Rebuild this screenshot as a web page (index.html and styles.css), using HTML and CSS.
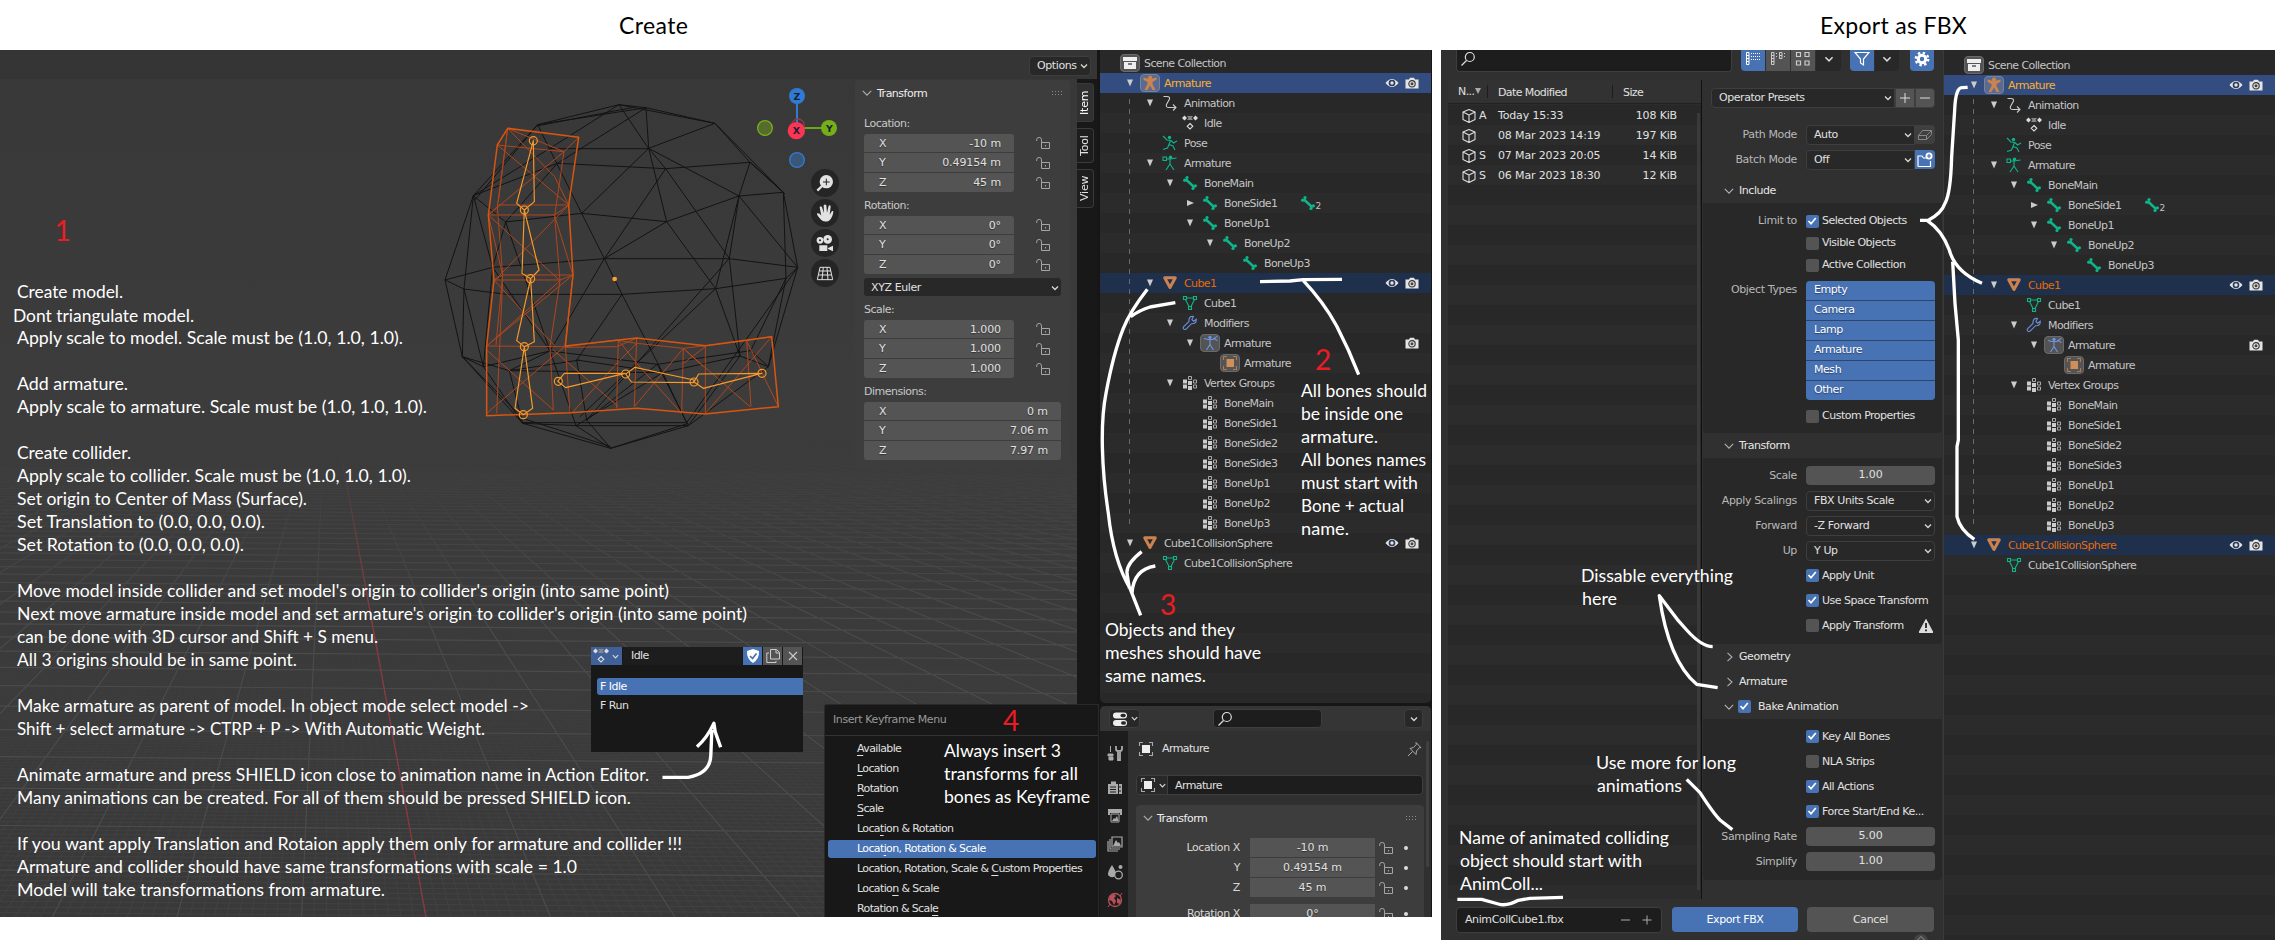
FILE: index.html
```html
<!DOCTYPE html>
<html lang="en">
<head>
<meta charset="utf-8">
<title>Create / Export as FBX</title>
<link rel="stylesheet" href="styles.css">
</head>
<body>
<svg class="defs" width="0" height="0">
  <symbol id="chev" viewBox="0 0 10 10"><path d="M2 3.5l3 3 3-3" fill="none" stroke="#d8d8d8" stroke-width="1.3"/></symbol>
  <symbol id="fold" viewBox="0 0 10 10"><path d="M.8 2.8L5 7.2l4.200-4.400" fill="none" stroke="#b0b0b0" stroke-width="1.100"/></symbol>
  <symbol id="foldr" viewBox="0 0 10 10"><path d="M3.500 .8L8 5 3.500 9.200" fill="none" stroke="#b0b0b0" stroke-width="1.100"/></symbol>
  <symbol id="lock" viewBox="0 0 14 12"><path d="M.7 4V2.800A2.300 2.300 0 0 1 5.500 2.800V5.500M5.500 5.500h8v6h-8z" fill="none" stroke="#a5a5a5" stroke-width="1"/><path d="M9.500 8v1.500" stroke="#a5a5a5"/></symbol>
  <symbol id="grip" viewBox="0 0 11 5"><path d="M0 .5h11M0 3.500h11" stroke="#8a8a8a" stroke-dasharray="1 2"/></symbol>
  <symbol id="mag" viewBox="0 0 16 16"><circle cx="9.800" cy="6" r="4.500" fill="none" stroke="#ddd" stroke-width="1.200"/><path d="M6.500 9.500L1.500 14.500" stroke="#ddd" stroke-width="1.300"/></symbol>
  <symbol id="collection" viewBox="0 0 16 16"><path d="M1 2h14v4H1zM2 7h12v7H2z" fill="#eee"/><path d="M6 9h4" stroke="#555" stroke-width="1.500"/></symbol>
  <symbol id="man" viewBox="0 0 16 16"><path d="M1.500 2.500l5 1.300a2 2 0 1 1 3.200 0l4.800-1.300v2.200L10.500 7v2l3 6h-3L8 10.500 5.500 15h-3l3-6V7l-4-2.300z" fill="#cb8350"/></symbol>
  <symbol id="anim" viewBox="0 0 16 16"><path d="M1.500 1.500H5Q8 1.500 7.500 4L4.500 9.500Q3.500 12.500 7 12.500h7M11 9.500l3 3-3 3" fill="none" stroke="#ccc" stroke-width="1.100"/></symbol>
  <symbol id="action" viewBox="0 0 16 16"><path d="M0 3l2.500-2.500L5 3 2.500 5.500zM11 3l2.500-2.500L16 3l-2.500 2.500z" fill="#ddd"/><path d="M5 1h6L9.500 3 11 5H5l1.500-2z" fill="#888"/><path d="M8 8.500l2.800 2.800L8 14l-2.800-2.700z" fill="none" stroke="#ddd" stroke-width="1.100"/></symbol>
  <symbol id="pose" viewBox="0 0 16 16"><circle cx="7.500" cy="2.500" r="1.700" fill="#0fb58a"/><path d="M1 1l4 4 4 .5 2.500 2.500L15 6M8.500 5.500L7 9.500l4 1.500 2 4M7 9.500L5.500 13 1 14.500" fill="none" stroke="#0fb58a" stroke-width="1.100"/></symbol>
  <symbol id="armdata" viewBox="0 0 16 16"><path d="M1 2h3.500v3.500H1zM4.500 4H8l6.500-1M8 4v5M8 9l-4 6M8 9l4 6" fill="none" stroke="#0fb58a" stroke-width="1.100"/><circle cx="8.500" cy="2.200" r="1.700" fill="#0fb58a"/></symbol>
  <symbol id="bone" viewBox="0 0 16 16"><path d="M4 4.500L12 12" stroke="#0fb58a" stroke-width="2.400"/><g fill="#0fb58a"><circle cx="5" cy="2.500" r="1.600"/><circle cx="2.700" cy="5.200" r="1.600"/><circle cx="13.400" cy="10.800" r="1.600"/><circle cx="11" cy="13.500" r="1.600"/><circle cx="4.500" cy="5" r="1.500"/><circle cx="11.500" cy="11.500" r="1.500"/></g></symbol>
  <symbol id="mesh" viewBox="0 0 16 16"><path d="M2.700 2.700h10.600L8 12.500z" fill="none" stroke="#c98250" stroke-width="3" stroke-linejoin="round"/></symbol>
  <symbol id="meshdata" viewBox="0 0 16 16"><path d="M4.500 3h7M3.500 4.500l3.500 7M12.500 4.500l-3.500 7M1.500 1.500h3v3h-3zM11.500 1.500h3v3h-3zM6.500 11.500h3v3h-3z" fill="none" stroke="#0fb58a" stroke-width="1.100"/></symbol>
  <symbol id="wrench" viewBox="0 0 16 16"><path d="M14.300 4.200l-2.700 2-1.700-1.600 1.500-3Q8 .5 7 4.500v2L1.700 11.600q-1.200 1.800.4 2.700 1.400.6 2.500-.7L9.500 8.700Q14.500 9 14.300 4.200z" fill="none" stroke="#6a8fe0" stroke-width="1.100"/></symbol>
  <symbol id="modarm" viewBox="0 0 16 16"><circle cx="8" cy="2.300" r="1.600" fill="#6f95e6"/><path d="M2 3.500l4 1h5l1.500-1.500M8 4.500v5M8 9.500L4.500 15M8 9.500l3.500 5.500M15.500 1.500l-2.500 1v2l2.500 1" fill="none" stroke="#6f95e6" stroke-width="1.100"/></symbol>
  <symbol id="objsel" viewBox="0 0 16 16"><path d="M4.500 4h7.500v8H4.500z" fill="#cf8f58"/><path d="M1.500 5V1.500H5M11 1.500h3.500V5M14.500 11v3.500H11M5 14.500H1.500V11" fill="none" stroke="#b07a50" stroke-width="1.100"/></symbol>
  <symbol id="objw" viewBox="0 0 16 16"><path d="M4 4h8v8H4z" fill="#eee"/><path d="M1.500 5V1.500H5M11 1.500h3.500V5M14.500 11v3.500H11M5 14.500H1.500V11" fill="none" stroke="#aaa" stroke-width="1.100"/></symbol>
  <symbol id="vgroup" viewBox="0 0 16 16"><path d="M1 4.500h4v4H1zM1 9.500h4v4H1zM6 6h4v4H6zM6 11h4v4H6z" fill="#ccc"/><path d="M6.500 1.500h3v3h-3zM11.500 5h3v3h-3zM11.500 10h3v3h-3z" fill="none" stroke="#aaa"/></symbol>
  <symbol id="eye" viewBox="0 0 14 12"><path d="M.5 6Q7-2 13.500 6 7 14 .5 6z" fill="#e4e4e4"/><circle cx="7" cy="6" r="3.300" fill="#2b3a58"/><circle cx="7" cy="6" r="1.700" fill="#e4e4e4"/></symbol>
  <symbol id="cam" viewBox="0 0 14 12"><path d="M.5 2.500H4L5 .8h4l1 1.700h3.500v9H.5z" fill="#e4e4e4"/><circle cx="7" cy="6.800" r="3.200" fill="#e4e4e4" stroke="#333" stroke-width="1.100"/><circle cx="7" cy="6.800" r="1.500" fill="#444"/></symbol>
  <symbol id="cube" viewBox="0 0 16 16"><path d="M8 1.500L14 4v7.500L8 14.500 2 11.500V4zM2 4l6 3 6-3M8 7v7.500" fill="none" stroke="#ddd" stroke-width="1.100" stroke-linejoin="round"/></symbol>
  <symbol id="check" viewBox="0 0 12 12"><path d="M2.500 6l2.500 2.800L9.800 3" fill="none" stroke="#fff" stroke-width="1.700"/></symbol>
</svg>

<header class="titles">
  <h1 class="title t-create">Create</h1>
  <h1 class="title t-export">Export as FBX</h1>
</header>

<main class="shots">
  <section class="shot create">
    <div class="viewport">
      <svg class="scene" width="1077" height="867" viewBox="0 50 1077 867">
        <defs>
          <linearGradient id="vp" x1="0" y1="0" x2="0" y2="1"><stop offset="0" stop-color="#383838"/><stop offset=".4" stop-color="#3c3c3c"/><stop offset="1" stop-color="#393939"/></linearGradient>
          <linearGradient id="fd" x1="0" y1="0" x2="0" y2="1"><stop offset=".45" stop-color="#000"/><stop offset=".66" stop-color="#fff"/></linearGradient>
          <linearGradient id="fd2" x1="0" y1="0" x2="0" y2="1"><stop offset=".6" stop-color="#000"/><stop offset=".95" stop-color="#fff"/></linearGradient>
          <mask id="m1"><rect y="50" width="1077" height="867" fill="url(#fd)"/></mask>
          <mask id="m2"><rect y="50" width="1077" height="867" fill="url(#fd2)"/></mask>
        </defs>
        <rect y="50" width="1077" height="867" fill="url(#vp)"/>
        <path id="minor" mask="url(#m2)" fill="none" stroke="#424242"/>
        <path id="major" mask="url(#m1)" fill="none" stroke="#4b4b4b" stroke-width="1.200"/>
        <path d="M340 448L426 917" stroke="#8f3640" stroke-width="1.200" mask="url(#m1)"/>
        <g transform="translate(420 50) scale(.33333)" fill="none" stroke-linejoin="round">
          <g stroke="#131313" stroke-width="3">
            <path d="M353 224L597 164 885 220 1090 427 1133 652 1045 950 805 1127 572 1195 308 1120 127 920 75 690 160 437z"/>
            <path d="M597 164l81 9L885 220M678 173L353 224M597 164L388 296H686L597 164M678 173L412 340M678 173l8 122M885 220L686 295M885 220l105 117L1090 427 957 438 686 295M990 337L737 356 412 340 160 437 388 296 353 224M990 337L957 438M686 295l51 61M686 295l54 220M686 295L485 490M737 356L553 626M737 356L928 625M957 438L740 515 485 490 257 516M957 438l176 214M957 438L928 625M740 515L553 626M740 515L887 716M388 296l97 194 68 136 53 107M553 626H928L1133 652M553 626L218 652 75 690 132 717 260 733H606L887 716 1098 685 1133 652M1090 427l8 258M928 625l32 293M928 625L500 1110M957 438L887 716 960 918M553 626L390 903M606 733L470 930M606 733L728 968M160 437l97 79 133 387M160 437L218 652 190 950M160 437L132 717 127 920 190 950M257 516L218 652M132 717l58 233M218 652L390 903 190 950M390 903l322 40 280-41L1098 685 1045 950 992 902M470 930l258 38 232-50 85 32M470 930L500 1110M268 962L728 968 468 1127M712 943L500 1110M728 968l72 150H308M712 943L805 1127M960 918L805 1127M1133 652L800 1118M887 716L480 1100M190 950L308 1120 468 1127H805M127 920l141 42 122-59M268 962l40 158M468 1127l104 68M500 1110l72 85M390 903l78 224M412 340L257 516M353 224L165 450M992 337L1095 432M640 172L350 228M572 1195L805 1120M480 930L268 962M127 920L308 1105 572 1190"/>
          </g>
          <g stroke="#b0461c" stroke-width="3">
            <path d="M232 285L432 305 404 497 420 692 390 890 400 1080M263 235L432 305 476 262M263 235L232 470 205 495M232 285L446 465M432 305L205 495H404L446 465H232M263 235L235 455M263 235L404 380 446 465M446 465L225 690H420L459 675H248L205 495M232 470L248 675 222 690M205 495L420 692M404 497L459 675 435 888M248 675L228 885M222 690L404 888M459 675L200 888 436 890M248 690L230 1090M420 692L200 888M200 900L400 1080M436 888L200 1090M436 888L450 1090M400 900L595 1070M436 890L590 870 650 880 790 895 856 887M595 870L590 1075M650 865L643 1070M595 935L455 1090M595 870L650 940M650 880L600 930M650 865L590 890 436 892M650 940L785 1090M790 895L643 1070M790 895L785 1090M856 887V1092M790 895L990 1070M856 890L790 940M856 887L980 872 1055 860M980 872L993 1070M980 872L1075 1070M1055 860L855 1092M790 895L850 950"/>
          </g>
          <path d="M263 235L476 262 446 465 459 675 436 888 650 864 856 887 1055 860 1075 1070 855 1092 650 1075 450 1088 200 1097V888L222 690 205 495 232 285z" stroke="#d9560f" stroke-width="4.500"/>
          <g stroke="#f79a2c" stroke-width="3.500">
            <path d="M340 272L290 460 313 480 343 455zM313 480L306 670 332 686 357 660zM332 686L290 872 313 890 343 875zM313 890L285 1075 310 1094 338 1075zM413 994l20-24H615L437 1013zM617 972l28-20L822 990 820 998 634 996zM822 996l14-24 189-2L850 1015z"/>
            <circle cx="340" cy="272" r="12"/><circle cx="313" cy="480" r="12"/><circle cx="332" cy="686" r="12"/><circle cx="313" cy="890" r="12"/><circle cx="310" cy="1094" r="12"/><circle cx="415" cy="994" r="12"/><circle cx="617" cy="972" r="12"/><circle cx="822" cy="996" r="12"/><circle cx="1026" cy="970" r="12"/>
          </g>
          <circle cx="584" cy="687" r="7" fill="#ff9f2e"/>
          <path d="M1131 138v104" stroke="#2f7ad3" stroke-width="6"/><path d="M1131 234h96" stroke="#6da516" stroke-width="6"/>
          <circle cx="1134" cy="226" r="19" stroke="#8f3a48" stroke-width="4"/>
          <circle cx="1131" cy="138" r="24" fill="#2f7ad3"/><circle cx="1227" cy="234" r="24" fill="#76ae17"/><circle cx="1129" cy="242" r="26" fill="#fb3553"/>
          <circle cx="1035" cy="234" r="22" fill="#566b2d" stroke="#76ae17" stroke-width="4"/><circle cx="1131" cy="330" r="22" fill="#3b5777" stroke="#2f7ad3" stroke-width="4"/>
          <g fill="#252525"><circle cx="1215" cy="399" r="42"/><circle cx="1215" cy="489" r="42"/><circle cx="1215" cy="579" r="42"/><circle cx="1215" cy="669" r="42"/></g>
          <g fill="#e2e2e2"><circle cx="1219" cy="395" r="20"/>
          <circle cx="1200" cy="571" r="10"/><circle cx="1223" cy="568" r="13"/><path d="M1198 586h24v17h-24zM1224 594l15-7v17l-15-7z"/>
          <path d="M1204 510q-14-14-13-20 8-1 12 6l1 2-5-26q3-6 7 0l6 17-1-23q4-5 8 0l2 22 5-21q5-3 6 3l-3 24 7-11q5-1 4 4-3 18-13 25-12 6-23-2z"/></g>
          <path d="M1209 396h20M1219 386v20" stroke="#222" stroke-width="3"/><path d="M1206 408l-14 14" stroke="#e2e2e2" stroke-width="7"/>
          <path d="M1200 652h30l8 37h-46zM1198 663h35M1195 675h40M1210 652l-4 37M1221 652l3 37" stroke="#e2e2e2" stroke-width="3"/>
          <circle cx="1200" cy="571" r="3" fill="#222"/><circle cx="1223" cy="568" r="3" fill="#222"/>
          <g class="axis" fill="#152133"><text x="1131" y="149">Z</text><text x="1228" y="245">Y</text><text x="1129" y="253">X</text></g>
        </g>
      </svg>
      <div class="vhead"><span class="optbtn">Options <svg width="10" height="10"><use href="#chev"/></svg></span></div>
      <div class="vbody">
        <div class="npanel">
          <div class="phead"><svg width="10" height="10"><use href="#fold"/></svg><b>Transform</b><svg class="grip" width="11" height="5"><use href="#grip"/></svg></div>
          <div class="nlab first">Location:</div><div class="nfields" data-v="-10 m|0.49154 m|45 m" data-lock="1"></div>
          <div class="nlab">Rotation:</div><div class="nfields" data-v="0°|0°|0°" data-lock="1"></div>
          <div class="nselect">XYZ Euler<svg width="10" height="10"><use href="#chev"/></svg></div>
          <div class="nlab">Scale:</div><div class="nfields" data-v="1.000|1.000|1.000" data-lock="1"></div>
          <div class="nlab">Dimensions:</div><div class="nfields wide" data-v="0 m|7.06 m|7.97 m"></div>
        </div>
        <div class="ntabs"><span class="on">Item</span><span class="t2">Tool</span><span>View</span></div>
      </div>

      <div class="action">
        <div class="ahead">
          <span class="abtn blue wide2"><svg width="16" height="16"><use href="#action"/></svg><svg width="9" height="9"><use href="#chev"/></svg></span>
          <span class="aname">Idle</span>
          <span class="abtn bright"><svg width="14" height="14" viewBox="0 0 14 14"><path d="M7 0l6 2q.5 8-6 12Q.5 10 1 2z" fill="#fff"/><path d="M4 7l2.500 2.500L10.500 4.500" fill="none" stroke="#4772b3" stroke-width="1.700"/></svg></span>
          <span class="abtn"><svg width="14" height="14" viewBox="0 0 14 14"><path d="M4.500 .5h6l3 3v6.500h-9zM10 .5v3.500h3.500M3 4H.8v9.500H10V12" fill="none" stroke="#ccc"/></svg></span>
          <span class="abtn"><svg width="10" height="10" viewBox="0 0 10 10"><path d="M1 1l8 8M9 1L1 9" stroke="#ccc" stroke-width="1.100"/></svg></span>
        </div>
        <div class="aitem sel">F Idle</div>
        <div class="aitem">F Run</div>
      </div>

      <div class="menu">
        <div class="mtitle">Insert Keyframe Menu</div>
        <div class="mi"><u>A</u>vailable</div><div class="mi"><u>L</u>ocation</div><div class="mi"><u>R</u>otation</div><div class="mi"><u>S</u>cale</div>
        <div class="mi">Loca<u>t</u>ion &amp; Rotation</div><div class="mi sel">Locat<u>i</u>on, Rotation &amp; Scale</div>
        <div class="mi">Location, Rotation, Scale &amp; <u>C</u>ustom Properties</div><div class="mi">Locatio<u>n</u> &amp; Scale</div><div class="mi lastmi">Rotation &amp; Scal<u>e</u></div>
      </div>
    </div>

    <div class="side">
      <div class="tree left" data-tree="left"></div>
      <div class="props">
        <div class="prhead">
          <span class="pbtn"><svg width="16" height="16" viewBox="0 0 16 16"><rect x="1" y="1.500" width="14" height="6" rx="3" fill="#eee"/><rect x="1" y="9" width="14" height="6" rx="3" fill="#eee"/><rect x="8.500" y="2.700" width="5.300" height="3.600" rx="1.800" fill="#282828"/><rect x="9" y="10.200" width="5" height="3.600" rx="1.800" fill="#282828"/></svg><svg width="9" height="9"><use href="#chev"/></svg></span>
          <span class="psearch"><svg width="16" height="16"><use href="#mag"/></svg></span>
          <span class="pdrop"><svg width="10" height="10"><use href="#chev"/></svg></span>
        </div>
        <div class="prbody">
          <div class="prtabs">
            <svg width="16" height="16" viewBox="0 0 16 16"><path d="M3.500 1v6M1 9h5v2H1zM2 12h4v3H2z" stroke="#aaa" stroke-width="1" fill="#aaa"/><path d="M9 1v3q0 2 2 2v9h2V6q2 0 2-2V1" fill="none" stroke="#aaa" stroke-width="1.800"/></svg>
            <svg width="16" height="16" viewBox="0 0 16 16"><path d="M1 4h10v10H1zM12 4h3v10h-3zM4 1.500h5V4H4z" fill="#aaa"/><path d="M3 7h6M3 9.500h6M3 12h6" stroke="#1d1d1d"/><path d="M13 6v2M13 10v2" stroke="#1d1d1d"/></svg>
            <svg width="16" height="16" viewBox="0 0 16 16"><path d="M1 1h14v6h-2V5H3v2H1z" fill="#aaa"/><path d="M4 6h8v8H4z" fill="none" stroke="#aaa"/><path d="M5 13l2-3 1 1 2-3 1.500 5z" fill="#aaa"/></svg>
            <svg width="16" height="16" viewBox="0 0 16 16"><path d="M5 1h10v10H5zM3 3v10h10M1 5v10h10" fill="none" stroke="#aaa" stroke-width="1.200"/><path d="M6 10l3-6 2 3 1-1 2 4z" fill="#aaa"/></svg>
            <svg width="16" height="16" viewBox="0 0 16 16"><path d="M5 1q5 8 4 10-3 4-7 1-3-2 3-11z" fill="#aaa"/><circle cx="11.500" cy="11" r="3.800" fill="#1d1d1d" stroke="#aaa" stroke-width="1.300"/><circle cx="13.500" cy="3" r="2" fill="#aaa"/></svg>
            <svg width="16" height="16" viewBox="0 0 16 16"><circle cx="8" cy="8" r="6.500" fill="none" stroke="#b8505a" stroke-width="1.300"/><path d="M3 4l4-2 2 2-2 2 2 3-2 4-2-4-3-1zM10 6l4 2-1 4-3-1z" fill="#b8505a"/><path d="M1 15L3 12M15 1l-2 3" stroke="#b8505a"/></svg>
          </div>
          <div class="prmain">
            <div class="crumb"><svg width="16" height="16"><use href="#objw"/></svg><span>Armature</span><svg class="pin" width="16" height="16" viewBox="0 0 16 16"><path d="M1 15l4.500-4.500M3 7.500l6 6 .5-3.500 3-3.500 1.500.3L9 1.500l.3 2L6.500 6.500z" fill="none" stroke="#aaa"/></svg></div>
            <div class="namef"><span class="nf1"><svg width="16" height="16"><use href="#objw"/></svg><svg width="9" height="9"><use href="#chev"/></svg></span><span class="nf2">Armature</span></div>
            <div class="ppanel">
              <div class="phead"><svg width="10" height="10"><use href="#fold"/></svg><b>Transform</b><svg class="grip" width="11" height="5"><use href="#grip"/></svg></div>
              <div class="prow"><label>Location X</label><span class="pf">-10 m</span><svg width="14" height="12"><use href="#lock"/></svg><i></i></div>
              <div class="prow"><label>Y</label><span class="pf">0.49154 m</span><svg width="14" height="12"><use href="#lock"/></svg><i></i></div>
              <div class="prow"><label>Z</label><span class="pf">45 m</span><svg width="14" height="12"><use href="#lock"/></svg><i></i></div>
              <div class="prow gap"><label>Rotation X</label><span class="pf">0°</span><svg width="14" height="12"><use href="#lock"/></svg><i></i></div>
            </div>
            <div class="pscroll"></div>
          </div>
        </div>
      </div>
    </div>
  </section>

  <section class="shot export">
    <div class="dialog">
      <div class="dtop">
        <span class="dsearch"><svg width="16" height="16"><use href="#mag"/></svg></span>
        <span class="seg s1"><em class="on"><svg width="16" height="14" viewBox="0 0 16 14"><path d="M1.500 .5h2.500v12H1.500zM1.500 3.500h2.500M1.500 6.500h2.500M1.500 9.500h2.500" fill="none" stroke="#fff"/><path d="M6 1.500h10M6 4.500h10M6 7.500h10" stroke="#fff" stroke-dasharray="1 1"/></svg></em><em class="grey"><svg width="16" height="14" viewBox="0 0 16 14"><path d="M1.500 .5h2.500v12H1.500zM1.500 3.500h2.500M1.500 6.500h2.500M1.500 9.500h2.500M9.500 .5h2.500v6H9.500zM9.500 3.500h2.500" fill="none" stroke="#ccc"/><path d="M6 1.500h2M6 4.500h2M14 1.500h2M14 4.500h2" stroke="#ccc" stroke-dasharray="1 1"/></svg></em><em class="grey"><svg width="16" height="16" viewBox="0 0 16 16"><path d="M1.500 1.500h4v4h-4zM10 1.500h4v4h-4zM1.500 10h4v4h-4zM10 10h4v4h-4z" fill="none" stroke="#ccc" stroke-width="1.200"/></svg></em><em><svg width="12" height="12"><use href="#chev"/></svg></em></span>
        <span class="seg s2"><em class="on"><svg width="16" height="16" viewBox="0 0 16 16"><path d="M1 1.500h14L9.500 8v6l-3-2V8z" fill="none" stroke="#fff" stroke-width="1.200"/></svg></em><em><svg width="12" height="12"><use href="#chev"/></svg></em></span>
        <span class="seg s3"><em class="on"><svg width="16" height="16" viewBox="0 0 16 16"><circle cx="8" cy="8" r="3.700" fill="none" stroke="#fff" stroke-width="3"/><circle cx="8" cy="8" r="6.200" fill="none" stroke="#fff" stroke-width="2.400" stroke-dasharray="2.430 2.430"/></svg></em></span>
      </div>
      <div class="dmid">
        <div class="files">
          <div class="fhead"><span class="c1">N...<svg width="6" height="6" viewBox="0 0 6 6"><path d="M0 0h6L3 6z" fill="#aaa"/></svg></span><span class="c2">Date Modified</span><span class="c3">Size</span></div>
          <div class="flist">
            <div class="frow"><svg width="16" height="16"><use href="#cube"/></svg><i>A</i><span>Today 15:33</span><b>108 KiB</b></div>
            <div class="frow"><svg width="16" height="16"><use href="#cube"/></svg><i></i><span>08 Mar 2023 14:19</span><b>197 KiB</b></div>
            <div class="frow"><svg width="16" height="16"><use href="#cube"/></svg><i>S</i><span>07 Mar 2023 20:05</span><b>14 KiB</b></div>
            <div class="frow"><svg width="16" height="16"><use href="#cube"/></svg><i>S</i><span>06 Mar 2023 18:30</span><b>12 KiB</b></div>
          </div>
        </div>
        <div class="opts">
          <div class="presets"><span class="sel">Operator Presets<svg width="10" height="10"><use href="#chev"/></svg></span><span class="pm"><svg width="10" height="10" viewBox="0 0 10 10"><path d="M0 5h10M5 0v10" stroke="#ddd"/></svg></span><span class="pm last"><svg width="10" height="10" viewBox="0 0 10 10"><path d="M0 5h10" stroke="#ddd"/></svg></span></div>
          <div class="orow o25 m17"><label>Path Mode</label><span class="osel short">Auto<svg width="10" height="10"><use href="#chev"/></svg></span><span class="obtn"><svg width="14" height="12" viewBox="0 0 14 12"><path d="M.5 6.500h8v4h-8zM.5 6.500l4-5h9l-5 5M13.500 1.500v4l-5 5" fill="none" stroke="#888"/></svg></span></div>
          <div class="orow o25"><label>Batch Mode</label><span class="osel short">Off<svg width="10" height="10"><use href="#chev"/></svg></span><span class="obtn blue"><svg width="16" height="16" viewBox="0 0 16 16"><path d="M1 14.500V4h4l1.500 2h3M13.500 9v5.500H1" fill="none" stroke="#fff" stroke-width="1.200"/><circle cx="12" cy="4" r="3.500" fill="#fff"/><path d="M10 4h4M12 2v4" stroke="#4772b3" stroke-width="1.200"/></svg></span></div>
          <div class="ohead inc"><svg width="10" height="10"><use href="#fold"/></svg>Include</div>
          <div class="sub sub1">
            <div class="orow o22"><label>Limit to</label><span class="cb on"><svg width="12" height="12"><use href="#check"/></svg></span><p>Selected Objects</p></div>
            <div class="orow o22"><label></label><span class="cb"></span><p>Visible Objects</p></div>
            <div class="orow o22"><label></label><span class="cb"></span><p>Active Collection</p></div>
            <div class="otypes"><label>Object Types</label><ul><li>Empty</li><li>Camera</li><li>Lamp</li><li>Armature</li><li>Mesh</li><li>Other</li></ul></div>
            <div class="orow cp"><label></label><span class="cb"></span><p>Custom Properties</p></div>
          </div>
          <div class="ohead"><svg width="10" height="10"><use href="#fold"/></svg>Transform</div>
          <div class="sub sub2">
            <div class="orow o25"><label>Scale</label><span class="oval">1.00</span></div>
            <div class="orow o25"><label>Apply Scalings</label><span class="osel">FBX Units Scale<svg width="10" height="10"><use href="#chev"/></svg></span></div>
            <div class="orow o25"><label>Forward</label><span class="osel">-Z Forward<svg width="10" height="10"><use href="#chev"/></svg></span></div>
            <div class="orow o25"><label>Up</label><span class="osel">Y Up<svg width="10" height="10"><use href="#chev"/></svg></span></div>
            <div class="orow o25"><label></label><span class="cb on"><svg width="12" height="12"><use href="#check"/></svg></span><p>Apply Unit</p></div>
            <div class="orow o25"><label></label><span class="cb on"><svg width="12" height="12"><use href="#check"/></svg></span><p>Use Space Transform</p></div>
            <div class="orow o25"><label></label><span class="cb"></span><p>Apply Transform</p><svg class="warn" width="14" height="14" viewBox="0 0 14 14"><path d="M7 .5L14 13.500H0z" fill="#ddd" stroke="#ddd" stroke-linejoin="round"/><path d="M7 4v5M7 10.500v1.700" stroke="#222" stroke-width="1.800"/></svg></div>
          </div>
          <div class="ohead"><svg width="10" height="10"><use href="#foldr"/></svg>Geometry</div>
          <div class="ohead"><svg width="10" height="10"><use href="#foldr"/></svg>Armature</div>
          <div class="ohead bake"><svg width="10" height="10"><use href="#fold"/></svg><span class="cb on"><svg width="12" height="12"><use href="#check"/></svg></span>Bake Animation</div>
          <div class="sub sub3">
            <div class="orow o25"><label></label><span class="cb on"><svg width="12" height="12"><use href="#check"/></svg></span><p>Key All Bones</p></div>
            <div class="orow o25"><label></label><span class="cb"></span><p>NLA Strips</p></div>
            <div class="orow o25"><label></label><span class="cb on"><svg width="12" height="12"><use href="#check"/></svg></span><p>All Actions</p></div>
            <div class="orow o25"><label></label><span class="cb on"><svg width="12" height="12"><use href="#check"/></svg></span><p>Force Start/End Ke...</p></div>
            <div class="orow o25"><label>Sampling Rate</label><span class="oval">5.00</span></div>
            <div class="orow o25"><label>Simplify</label><span class="oval">1.00</span></div>
          </div>
        </div>
      </div>
      <div class="dbot"><span class="fname">AnimCollCube1.fbx<svg width="31" height="10" viewBox="0 0 31 10"><path d="M0 5h9M21.500 5h9M26 .5v9" stroke="#aaa"/></svg></span><span class="bexp">Export FBX</span><span class="bcan">Cancel</span>
        <svg class="handle" width="14" height="6" viewBox="0 0 14 6"><circle cx="7" cy="7" r="7" fill="#444"/><path d="M3.500 6L7 2.500 10.500 6" fill="none" stroke="#999"/></svg></div>
    </div>
    <div class="tree right" data-tree="right"></div>
  </section>
</main>

<svg class="notes" width="2275" height="940" viewBox="0 0 2275 940">
  <g id="notes" fill="#fff"></g>
  <g class="num"><text x="54.500" y="241">1</text><text x="1315" y="370">2</text><text x="1160" y="615">3</text><text x="1003" y="731">4</text></g>
  <g fill="none" stroke="#fff" stroke-linejoin="round">
    <g transform="translate(580 630) scale(.33806 .33333)" stroke-width="10"><path d="M244 442H320Q386 430 387 375L390 300M346 350Q375 325 396 280L400 305 416 352"/></g>
    <g transform="translate(1090 40) scale(.33333)" stroke-width="10"><path d="M510 725L600 723 640 719 756 718M640 722Q700 785 740 858L775 930 806 1004M172 748Q120 815 100 865 70 940 48 1060C30 1150 35 1290 55 1420Q70 1560 120 1645L152 1726M256 788L180 801Q150 810 122 830M155 1535Q108 1572 111 1600L118 1645M196 1578Q130 1588 126 1660"/></g>
    <g transform="translate(1430 0) scale(.33333)" stroke-width="10"><path d="M1470 661H1495Q1535 640 1545 610 1562 580 1565 470L1574 330Q1577 262 1596 263L1613 262M1492 662Q1535 690 1558 750 1575 815 1656 850M1568 785L1575 910 1585 1020V1320L1581 1340V1550Q1590 1590 1633 1618"/></g>
    <g transform="translate(1430 430) scale(.33333)" stroke-width="10"><path d="M848 650Q815 650 770 600L745 572 688 497Q715 690 800 763L863 773M770 1048L810 1088Q850 1150 870 1170L907 1199M82 1408H155L205 1422Q230 1430 265 1411L300 1405 399 1402"/></g>
  </g>
</svg>
<script src="app.js"></script>
</body>
</html>
```
FILE: styles.css
```css
* { box-sizing: border-box; }
body { margin: 0; width: 2275px; height: 940px; overflow: hidden; position: relative; background: #fff; color: #e0e0e0; font: 11px/18px "DejaVu Sans", sans-serif; letter-spacing: -0.6px; }
svg { display: block; flex: none; }
b, i, em { font-weight: normal; font-style: normal; }
p, ul { margin: 0; padding: 0; list-style: none; }
.defs { position: absolute; }
.titles { display: flex; height: 50px; padding-left: 619px; }
.title { margin: 0; font: 23px/50px Lato, sans-serif; letter-spacing: .4px; color: #000; }
.t-create { width: 1201px; }
.t-export { letter-spacing: .3px; }
.shots { display: flex; gap: 9px; align-items: flex-start; }
.shot { display: flex; overflow: hidden; }
.create { width: 1432px; height: 867px; background: #161616; }
.export { width: 834px; height: 890px; background: #303030; }

.viewport { position: relative; width: 1100px; height: 867px; }
.scene { position: absolute; left: 0; top: 0; }
.axis { font: bold 28px "DejaVu Sans", sans-serif; text-anchor: middle; letter-spacing: 0; }
.vhead { position: relative; width: 1097px; height: 29px; background: #353535; display: flex; justify-content: flex-end; padding: 6px 6px 0 0; }
.optbtn { width: 62px; height: 20px; border: 1px solid #3e3e3e; border-radius: 4px; background: #282828; display: flex; align-items: center; justify-content: space-between; padding: 0 1px 0 7px; letter-spacing: -.4px; }
.vbody { position: relative; display: flex; justify-content: flex-end; width: 1097px; }
.npanel { width: 215px; height: 390px; margin: 1px 7px 0 0; background: #3d3d3d; border-radius: 4px; padding: 0 9px; }
.phead { height: 26px; display: flex; align-items: center; color: #eee; }
.phead b { margin: 1px 0 0 4px; letter-spacing: -.5px; }
.npanel .phead { margin-left: -2px; }
.npanel .phead b { margin-left: 5px; }
.grip { margin-left: auto; margin-right: -2px; }
.nlab { height: 21px; line-height: 22px; margin-top: 3px; color: #c8c8c8; letter-spacing: -.5px; }
.nlab.first { margin-top: 7px; }
.nfields { display: grid; grid-template: 18px 19px 19px / 150px 14px; gap: 1px 22px; align-items: center; }
.nfields .f { background: #545454; height: 100%; display: flex; justify-content: space-between; align-items: center; padding: 1px 13px 0 15px; letter-spacing: -.1px; text-shadow: 0 1px 1px #333; }
.nfields .f:first-child { border-radius: 3px 3px 0 0; }
.nfields .f.z { border-radius: 0 0 3px 3px; }
.nfields.wide { grid-template-columns: 197px; }
.nselect { height: 18px; margin-top: 4px; background: #282828; border-radius: 3px; display: flex; align-items: center; justify-content: space-between; padding: 1px 1px 0 7px; letter-spacing: -.4px; }
.ntabs { width: 20px; height: 838px; background: #181818; display: flex; flex-direction: column; padding-top: 4px; gap: 6px; }
.ntabs span { width: 17px; height: 39px; border: 1px solid #3a3a3a; border-right: 0; background: #1d1d1d; writing-mode: vertical-rl; transform: rotate(180deg); border-radius: 4px 0 0 4px; text-align: center; line-height: 16px; letter-spacing: -.2px; }
.ntabs span { border-right: 0; border-left: 1px solid #3a3a3a; }
.ntabs .on { background: #303030; color: #fff; }
.ntabs .t2 { height: 35px; }

.action { position: absolute; left: 591px; top: 597px; width: 212px; height: 105px; background: #181818; }
.ahead { display: flex; height: 18px; gap: 1px; margin-bottom: 13px; padding-right: 1px; }
.abtn { width: 19px; background: #545454; display: flex; align-items: center; justify-content: center; }
.abtn.blue { background: #40609a; width: 31px; gap: 2px; }
.abtn.bright { background: #4772b3; }
.aname { flex: 1; background: #1d1d1d; padding-left: 8px; }
.aitem { margin-left: 6px; padding-left: 3px; height: 17px; line-height: 17px; margin-bottom: 2px; letter-spacing: -.5px; }
.aitem.sel { background: #4772b3; border-radius: 3px 0 0 3px; color: #fff; }
.menu { position: absolute; left: 824px; top: 654px; width: 275px; height: 213px; background: #181818; border: 1px solid #2a2a2a; border-bottom: 0; border-radius: 3px 0 0 0; padding: 0 2px 0 3px; }
.mtitle { height: 31px; line-height: 30px; margin: 0 -2px 4px -3px; padding-left: 8px; border-bottom: 1px solid #333; color: #989898; letter-spacing: -.4px; }
.mi { height: 18px; line-height: 18px; margin-bottom: 2px; padding-left: 29px; border-radius: 3px; white-space: nowrap; letter-spacing: -.62px; }
.mi u { text-underline-offset: 3px; text-decoration-thickness: 1px; text-decoration-skip-ink: none; }
.mi.sel { background: #4772b3; color: #fff; }
.mi.lastmi { height: 17px; margin-bottom: 0; }

.side { width: 331px; display: flex; flex-direction: column; gap: 3px; }
.tree { width: 331px; position: relative; overflow: hidden; color: #c5c5c5; background: repeating-linear-gradient(#282828 0 20px, #2b2b2b 20px 40px); }
.tree.left { height: 653px; padding-top: 3px; background-position: 0 3px; border-radius: 0 0 5px 5px; }
.tree.right { height: 890px; padding-top: 5px; background-position: 0 5px; }
.tree::after { content: ""; position: absolute; left: 29px; top: 49px; height: 430px; width: 1px; background: repeating-linear-gradient(#6a6a6a 0 5px, transparent 5px 10px); }
.trow { height: 20px; display: flex; align-items: center; position: relative; }
.trow .tw { width: 10px; height: 10px; margin-right: 5px; }
.trow .ic { width: 20px; height: 18px; display: flex; align-items: center; justify-content: center; margin-right: 4px; border-radius: 4px; }
.trow .ic svg { margin-top: -1px; }
.trow .box { background: #545454; border: 1px solid #6a6a6a; }
.trow.act { background: #334d80; color: #ffaf29; }
.trow.act .box { background: #5a6b8f; border-color: #7583a2; }
.trow.selr { background: #1f304d; color: #e96a00; }
.trow .tx { line-height: 18px; padding-top: 2px; }
.trow .extra { display: flex; margin-left: 23px; font-size: 9px; align-items: flex-end; line-height: 9px; }
.trow .extra svg { margin-right: -1px; }
.trow .vis { position: absolute; right: 12px; top: 4px; display: flex; gap: 6px; }

.props { height: 211px; background: #303030; border-radius: 5px 5px 0 0; overflow: hidden; }
.prhead { height: 25px; background: #353535; display: flex; padding: 3px 8px 0 9px; }
.prhead span { height: 19px; background: #282828; border: 1px solid #3e3e3e; border-radius: 4px; display: flex; align-items: center; }
.pbtn { width: 31px; padding-left: 2px; gap: 2px; }
.psearch { width: 109px; margin-left: 73px; padding-left: 3px; }
.prhead .psearch { background: #1d1d1d; }
.pdrop { width: 19px; margin-left: auto; justify-content: center; }
.prbody { display: flex; }
.prtabs { width: 28px; height: 186px; background: #1d1d1d; padding: 14px 0 0 7px; display: flex; flex-direction: column; gap: 12px; }
.prtabs svg:first-child { margin-bottom: 7px; }
.prmain { position: relative; flex: 1; padding-left: 8px; }
.crumb { display: flex; height: 20px; margin-top: 8px; padding-left: 2px; align-items: center; gap: 8px; }
.pin { margin-left: auto; margin-right: 8px; }
.namef { display: flex; width: 287px; height: 20px; margin-top: 16px; border: 1px solid #3e3e3e; border-radius: 4px; background: #1d1d1d; }
.nf1 { width: 31px; display: flex; align-items: center; background: #282828; border-right: 1px solid #3e3e3e; padding-left: 3px; gap: 2px; border-radius: 4px 0 0 4px; }
.nf2 { padding: 1px 0 0 7px; }
.ppanel { margin-top: 10px; width: 288px; height: 130px; background: #3d3d3d; border-radius: 4px; }
.ppanel .phead { padding: 0 9px 0 7px; margin-bottom: 7px; }
.prow { display: flex; align-items: center; height: 19px; margin-bottom: 1px; }
.prow label { width: 104px; margin-right: 10px; text-align: right; color: #d8d8d8; letter-spacing: -.4px; }
.pf { width: 125px; height: 19px; line-height: 19px; background: #545454; text-align: center; letter-spacing: -.1px; margin-right: 4px; text-shadow: 0 1px 1px #333; }
.prow.gap { margin-top: 7px; }
.prow i { width: 4px; height: 4px; border-radius: 2px; background: #ddd; margin-left: 11px; }
.pscroll { position: absolute; left: 298px; top: 10px; width: 3px; height: 126px; background: #404040; border-radius: 2px; }

.dialog { width: 503px; height: 890px; border-right: 1px solid #3a3a3a; }
.dtop { display: flex; height: 30px; padding-left: 15px; align-items: flex-start; }
.dsearch { width: 276px; height: 22px; background: #1d1d1d; border: 1px solid #3e3e3e; border-top: 0; border-radius: 0 0 4px 4px; padding: 1px 0 0 3px; }
.seg { display: flex; height: 21px; margin-left: 9px; gap: 1px; border-radius: 0 0 4px 4px; overflow: hidden; }
.seg em { width: 24px; background: #282828; display: flex; align-items: center; justify-content: center; padding-bottom: 3px; }
.seg .on { background: #4772b3; }
.seg .grey { background: #545454; }
.s1 em:last-child { width: 25px; }
.s3 { margin-left: 11px; }
.dmid { display: flex; height: 819px; }
.files { width: 254px; margin-left: 7px; border-right: 1px solid #111; background: #282828; }
.fhead { display: flex; height: 24px; line-height: 26px; background: #323232; border-bottom: 1px solid #222; }
.fhead span { height: 24px; }
.c1 { width: 39px; padding-left: 10px; display: flex; align-items: center; }
.c1 svg { margin: -3px 0 0 1px; }
.c2, .c3 { position: relative; background: linear-gradient(#1d1d1d, #1d1d1d) 0 5px / 1px 13px no-repeat; }
.c2 { width: 125px; padding-left: 11px; }
.c3 { padding-left: 11px; }
.flist { height: 795px; padding-top: 1px; background: linear-gradient(#3a3a3a, #3a3a3a) 249px 9px / 3px 777px no-repeat, repeating-linear-gradient(#282828 0 20px, #2c2c2c 20px 40px) 0 1px; letter-spacing: -.15px; }
.frow { display: flex; height: 20px; align-items: center; padding: 1px 0 0 13px; }
.frow i { width: 18px; margin-left: 2px; margin-right: 1px; }
.frow span { width: 103px; }
.frow b { width: 76px; text-align: right; }
.opts { width: 241px; padding: 8px 0 0 1px; }
.presets { display: flex; height: 20px; margin-left: 8px; }
.presets span { border: 1px solid #3e3e3e; display: flex; align-items: center; }
.presets .sel { width: 184px; background: #282828; border-radius: 4px 0 0 4px; padding: 0 1px 0 7px; justify-content: space-between; letter-spacing: -.45px; }
.presets .pm { width: 20px; background: #545454; justify-content: center; }
.presets .last { border-radius: 0 4px 4px 0; }
.orow { display: flex; align-items: center; }
.orow label, .otypes label { width: 94px; margin-right: 9px; text-align: right; color: #b8b8b8; letter-spacing: -.35px; white-space: nowrap; }
.o25 { height: 25px; }
.o22 { height: 22px; }
.m17 { margin-top: 14px; }
.osel { width: 129px; height: 20px; border: 1px solid #3e3e3e; border-radius: 4px; background: #282828; display: flex; align-items: center; justify-content: space-between; padding: 0 1px 0 7px; letter-spacing: -.4px; }
.osel.short { width: 109px; border-radius: 4px 0 0 4px; }
.obtn { width: 20px; height: 19px; background: #3f3f3f; border-radius: 0 4px 4px 0; display: flex; align-items: center; justify-content: center; }
.obtn.blue { background: #4772b3; }
.ohead { height: 25px; display: flex; align-items: center; padding-left: 21px; gap: 5px; color: #e6e6e6; letter-spacing: -.45px; }
.ohead.inc { margin-top: 7px; height: 24px; }
.ohead.bake { gap: 4px; }
.sub { background: #282828; border-radius: 0 0 4px 4px; width: 239px; }
.sub1 { height: 230px; padding-top: 7px; }
.sub2 { height: 186px; padding-top: 5px; }
.sub3 { height: 161px; padding-top: 5px; }
.cb { width: 13px; height: 13px; background: #545454; border-radius: 2px; margin-right: 3px; flex: none; display: flex; }
.cb.on { background: #4772b3; }
.orow p { letter-spacing: -.5px; white-space: nowrap; }
.otypes { display: flex; margin-top: 5px; }
.otypes ul { width: 129px; height: 119px; background: #30456b; border-radius: 4px; overflow: hidden; display: grid; grid-auto-rows: 19px; gap: 1px; color: #fff; text-shadow: 0 1px 1px #2a4370; letter-spacing: -.45px; }
.otypes li { background: #4772b3; padding-left: 8px; }
.cp { height: 22px; margin-top: 5px; }
.oval { width: 129px; height: 19px; background: #545454; border-radius: 4px; text-align: center; letter-spacing: -.1px; }
.warn { margin-left: 15px; }
.dbot { position: relative; display: flex; padding: 8px 0 0 15px; line-height: 26px; text-align: center; }
.fname { width: 206px; height: 26px; background: #1d1d1d; border: 1px solid #3e3e3e; border-radius: 4px; padding: 0 9px 0 8px; display: flex; align-items: center; justify-content: space-between; letter-spacing: -.4px; }
.bexp { width: 126px; height: 25px; margin-left: 10px; background: #4772b3; border-radius: 4px; color: #fff; letter-spacing: -.4px; }
.bcan { width: 127px; height: 25px; margin-left: 9px; background: #545454; border-radius: 4px; letter-spacing: -.4px; }
.handle { position: absolute; left: 473px; top: 35px; }

.notes { position: absolute; left: 0; top: 0; font: 17px Lato, sans-serif; letter-spacing: 0; }
.num { font-size: 28px; fill: #ed1c24; }
```
FILE: app.js
```js
// Outliner rows: depth, expander, icon, label, flags
var rows = [
  [0, '', 'collection', 'Scene Collection', 'box'],
  [1, 'v', 'man', 'Armature', 'box act vis'],
  [2, 'v', 'anim', 'Animation', ''],
  [3, '', 'action', 'Idle', ''],
  [2, '', 'pose', 'Pose', ''],
  [2, 'v', 'armdata', 'Armature', ''],
  [3, 'v', 'bone', 'BoneMain', ''],
  [4, '>', 'bone', 'BoneSide1', 'extra'],
  [4, 'v', 'bone', 'BoneUp1', ''],
  [5, 'v', 'bone', 'BoneUp2', ''],
  [6, '', 'bone', 'BoneUp3', ''],
  [2, 'v', 'mesh', 'Cube1', 'selr vis'],
  [3, '', 'meshdata', 'Cube1', ''],
  [3, 'v', 'wrench', 'Modifiers', ''],
  [4, 'v', 'modarm', 'Armature', 'box cam'],
  [5, '', 'objsel', 'Armature', 'box'],
  [3, 'v', 'vgroup', 'Vertex Groups', ''],
  [4, '', 'vgroup', 'BoneMain', ''],
  [4, '', 'vgroup', 'BoneSide1', ''],
  [4, '', 'vgroup', 'BoneSide2', ''],
  [4, '', 'vgroup', 'BoneSide3', ''],
  [4, '', 'vgroup', 'BoneUp1', ''],
  [4, '', 'vgroup', 'BoneUp2', ''],
  [4, '', 'vgroup', 'BoneUp3', ''],
  [1, 'v', 'mesh', 'Cube1CollisionSphere', 'vis last'],
  [2, '', 'meshdata', 'Cube1CollisionSphere', '']
];
function icon(id, w, h) { return '<svg width="' + w + '" height="' + h + '"><use href="#' + id + '"/></svg>'; }
var tri = {
  'v': '<path d="M2 1.500h6L5 8.500z" fill="#ccc"/>',
  '>': '<path d="M2 2v6l7-3z" fill="#ccc"/>',
  '': ''
};
document.querySelectorAll('.tree').forEach(function (t) {
  t.innerHTML = rows.map(function (r) {
    var f = r[4].split(' ');
    var has = function (k) { return f.indexOf(k) >= 0; };
    var cls = has('act') ? ' act' : (has('selr') || (has('last') && t.dataset.tree === 'right')) ? ' selr' : '';
    var vis = has('vis') ? icon('eye', 14, 12) + icon('cam', 14, 12) : has('cam') ? icon('cam', 14, 12) : '';
    return '<div class="trow' + cls + '" style="padding-left:' + (r[0] * 20 + 5) + 'px">' +
      '<svg class="tw" viewBox="0 0 10 10">' + tri[r[1]] + '</svg>' +
      '<span class="ic' + (has('box') ? ' box' : '') + '">' + icon(r[2], 16, 16) + '</span>' +
      '<span class="tx">' + r[3] + '</span>' +
      (has('extra') ? '<span class="extra">' + icon('bone', 16, 16) + '2</span>' : '') +
      '<span class="vis">' + vis + '</span></div>';
  }).join('');
});

// Numeric X/Y/Z field stacks
document.querySelectorAll('.nfields').forEach(function (n) {
  n.innerHTML = n.dataset.v.split('|').map(function (v, i) {
    return '<span class="f' + (i === 2 ? ' z' : '') + '"><span>' + 'XYZ'[i] + '</span><span>' + v + '</span></span>' +
      (n.dataset.lock ? icon('lock', 14, 12) : '');
  }).join('');
});

// Perspective floor grid
function grid(step, from) {
  var d = '', k, y, s;
  for (k = -40; k <= 40; k += step) d += 'M327 375L' + (426 + k * 124.5).toFixed(1) + ' 917';
  for (s = 0.00182; s < from; s += 0.0002 * step) {
    y = 375 + 1 / s;
    d += 'M0 ' + y.toFixed(1) + 'L1077 ' + (y + 8).toFixed(1);
  }
  return d;
}
document.getElementById('major').setAttribute('d', grid(1, 0.011));
document.getElementById('minor').setAttribute('d', grid(0.1, 0.0035));

// Annotation lines: x, baseline, right edge, text
var notes = [
  [17, 298, 123, 'Create model.'], [13, 322, 194, 'Dont triangulate model.'],
  [17, 344, 403, 'Apply scale to model. Scale must be (1.0, 1.0, 1.0).'],
  [17, 390, 128, 'Add armature.'], [17, 413, 427, 'Apply scale to armature. Scale must be (1.0, 1.0, 1.0).'],
  [17, 459, 131, 'Create collider.'], [17, 482, 411, 'Apply scale to collider. Scale must be (1.0, 1.0, 1.0).'],
  [17, 505, 307, 'Set origin to Center of Mass (Surface).'], [17, 528, 265, 'Set Translation to (0.0, 0.0, 0.0).'],
  [17, 551, 244, 'Set Rotation to (0.0, 0.0, 0.0).'],
  [17, 597, 669, "Move model inside collider and set model's origin to collider's origin (into same point)"],
  [17, 620, 747, "Next move armature inside model and set armature's origin to collider's origin (into same point)"],
  [17, 643, 378, 'can be done with 3D cursor and Shift + S menu.'], [17, 666, 297, 'All 3 origins should be in same point.'],
  [17, 712, 529, 'Make armature as parent of model. In object mode select model ->'],
  [17, 735, 485, 'Shift + select armature -> CTRP + P -> With Automatic Weight.'],
  [17, 781, 649, 'Animate armature and press SHIELD icon close to animation name in Action Editor.'],
  [17, 804, 631, 'Many animations can be created. For all of them should be pressed SHIELD icon.'],
  [17, 850, 682, 'If you want apply Translation and Rotaion apply them only for armature and collider !!!'],
  [17, 873, 577, 'Armature and collider should have same transformations with scale = 1.0'],
  [17, 896, 385, 'Model will take transformations from armature.'],
  [1301, 397, 1427, 'All bones should'], [1301, 420, 1403, 'be inside one'], [1301, 443, 1378, 'armature.'],
  [1301, 466, 1426, 'All bones names'], [1301, 489, 1418, 'must start with'], [1301, 512, 1404, 'Bone + actual'], [1301, 535, 1349, 'name.'],
  [1105, 636, 1235, 'Objects and they'], [1105, 659, 1261, 'meshes should have'], [1105, 682, 1206, 'same names.'],
  [944, 757, 1061, 'Always insert 3'], [944, 780, 1078, 'transforms for all'], [944, 803, 1090, 'bones as Keyframe'],
  [1581, 582, 1733, 'Dissable everything'], [1582, 605, 1617, 'here'],
  [1596, 769, 1736, 'Use more for long'], [1597, 792, 1682, 'animations'],
  [1459, 844, 1669, 'Name of animated colliding'], [1460, 867, 1642, 'object should start with'], [1460, 890, 1543, 'AnimColl...']
];
document.getElementById('notes').innerHTML = notes.map(function (n) {
  return '<text x="' + n[0] + '" y="' + n[1] + '" textLength="' + (n[2] - n[0]) + '" lengthAdjust="spacingAndGlyphs">' + n[3].replace(/>/g, '&gt;') + '</text>';
}).join('');
```
